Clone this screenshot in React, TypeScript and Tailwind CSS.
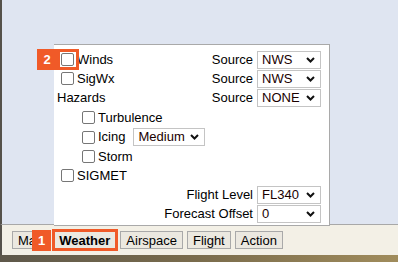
import React from "react";

function Check({ className = "" }: { className?: string }) {
  return (
    <span
      className={`inline-block w-[13px] h-[13px] shrink-0 border border-[#767676] rounded-[2px] bg-white ml-[4px] mr-[3px] ${className}`}
    />
  );
}

function Select({ value, w = "w-[64px]" }: { value: string; w?: string }) {
  return (
    <div
      className={`${w} h-[18px] border border-[#c4c4c4] bg-white flex items-center justify-between pl-[4px] pr-[5px] text-[#1a0000]`}
    >
      <span>{value}</span>
      <svg width="9" height="6" viewBox="0 0 9 6">
        <polyline points="1,1 4.5,4.5 8,1" fill="none" stroke="#111" strokeWidth="2" />
      </svg>
    </div>
  );
}

function Btn({ label, bold = false }: { label: string; bold?: boolean }) {
  return (
    <div
      className={`h-[18px] px-[5px] border border-[#a9a9a9] bg-[#ebe8e0] flex items-center leading-none ${
        bold ? "font-bold" : ""
      }`}
    >
      {label}
    </div>
  );
}

export default function App() {
  return (
    <div className="relative w-[398px] h-[262px] overflow-hidden font-['Liberation_Sans',Arial,sans-serif] text-[13px] text-black">
      <div className="flex flex-col h-full">
        <div className="h-[225px] bg-[#dfe5f1] border-l-2 border-l-[#55514a] border-b border-b-[#a8a8a8]" />
        <div className="h-[30px] bg-[#f3f0e6] border-l-2 border-l-[#55514a] flex items-center pl-[10px] gap-[4px]">
          <Btn label="Map" />
          <Btn label="Weather" bold />
          <Btn label="Airspace" />
          <Btn label="Flight" />
          <Btn label="Action" />
        </div>
        <div className="h-[7px] bg-gradient-to-r from-[#5e584a] via-[#7a6c4c] to-[#a08c5c]" />
      </div>

      {/* weather popup */}
      <div className="absolute left-[54px] top-[44px] w-[276px] bg-white border-t border-r border-b border-[#a9a9a9] pt-[5px] pl-[3px] pr-[8px] pb-[2px]">
        <div className="h-[19px] flex items-center justify-between">
          <div className="flex items-center">
            <Check />
            <span>Winds</span>
          </div>
          <div className="flex items-center gap-[4px]">
            <span>Source</span>
            <Select value="NWS" />
          </div>
        </div>
        <div className="h-[19px] flex items-center justify-between">
          <div className="flex items-center">
            <Check />
            <span>SigWx</span>
          </div>
          <div className="flex items-center gap-[4px]">
            <span>Source</span>
            <Select value="NWS" />
          </div>
        </div>
        <div className="h-[19px] flex items-center justify-between mb-[1px]">
          <span>Hazards</span>
          <div className="flex items-center gap-[4px]">
            <span>Source</span>
            <Select value="NONE" />
          </div>
        </div>
        <div className="pl-[21px]">
          <div className="h-[19px] flex items-center">
            <Check />
            <span>Turbulence</span>
          </div>
          <div className="h-[20px] flex items-center">
            <Check />
            <span>Icing</span>
            <div className="ml-[8px]">
              <Select value="Medium" w="w-[72px]" />
            </div>
          </div>
          <div className="h-[19px] flex items-center">
            <Check />
            <span>Storm</span>
          </div>
        </div>
        <div className="h-[19px] flex items-center">
          <Check />
          <span>SIGMET</span>
        </div>
        <div className="h-[19px] flex items-center justify-end gap-[4px]">
          <span>Flight Level</span>
          <Select value="FL340" />
        </div>
        <div className="h-[19px] flex items-center justify-end gap-[4px]">
          <span>Forecast Offset</span>
          <Select value="0" />
        </div>
      </div>

      {/* annotations */}
      <div className="absolute left-[57px] top-[49px] w-[22px] h-[21px] border-[3px] border-[#f05a28]" />
      <div className="absolute left-[37px] top-[49px] w-[20px] h-[21px] bg-[#f05a28] text-white font-bold flex items-center justify-center">
        2
      </div>
      <div className="absolute left-[52px] top-[229px] w-[66px] h-[22px] border-[3px] border-[#f05a28]" />
      <div className="absolute left-[32px] top-[230px] w-[19px] h-[21px] bg-[#f05a28] text-white font-bold flex items-center justify-center">
        1
      </div>
    </div>
  );
}
